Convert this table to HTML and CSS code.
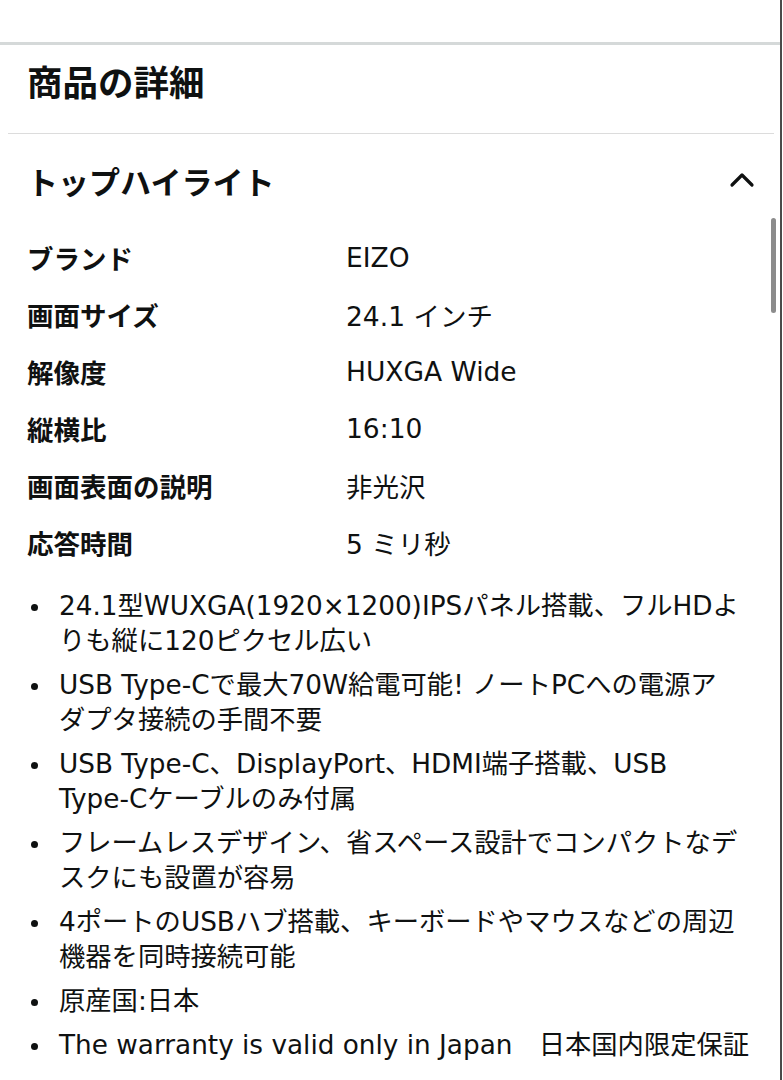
FILE: index.html
```html
<!DOCTYPE html>
<html lang="ja">
<head>
<meta charset="utf-8">
<link rel="stylesheet" href="styles.css">
</head>
<body>
<div class="page">
  <div class="top-space"></div>
  <div class="thick-sep"></div>
  <h2 class="section-title">商品の詳細</h2>
  <div class="thin-sep"></div>
  <div class="expander">
    <h3 class="expander-title">トップハイライト</h3>
    <svg class="chevron" width="26" height="18" viewBox="0 0 26 18"><path d="M3 15 L13 5 L23 15" fill="none" stroke="#0f1111" stroke-width="3.2" stroke-linecap="round" stroke-linejoin="round"/></svg>
  </div>
  <div class="specs">
    <div class="label">ブランド</div><div class="value">EIZO</div>
    <div class="label">画面サイズ</div><div class="value">24.1 インチ</div>
    <div class="label">解像度</div><div class="value">HUXGA Wide</div>
    <div class="label">縦横比</div><div class="value">16:10</div>
    <div class="label">画面表面の説明</div><div class="value">非光沢</div>
    <div class="label">応答時間</div><div class="value">5 ミリ秒</div>
  </div>
  <ul class="bullets">
    <li><span>24.1型WUXGA(1920×1200)IPSパネル搭載、フルHDよ<br>りも縦に120ピクセル広い</span></li>
    <li><span>USB Type-Cで最大70W給電可能! ノートPCへの電源ア<br>ダプタ接続の手間不要</span></li>
    <li><span>USB Type-C、DisplayPort、HDMI端子搭載、USB<br>Type-Cケーブルのみ付属</span></li>
    <li><span>フレームレスデザイン、省スペース設計でコンパクトなデ<br>スクにも設置が容易</span></li>
    <li><span>4ポートのUSBハブ搭載、キーボードやマウスなどの周辺<br>機器を同時接続可能</span></li>
    <li><span>原産国:日本</span></li>
    <li><span>The warranty is valid only in Japan　日本国内限定保証</span></li>
  </ul>
  <div class="scroll-thumb"></div>
</div>
</body>
</html>
```
FILE: styles.css
```css
html, body {
  margin: 0;
  padding: 0;
  background: #fff;
}
body {
  font-family: "DejaVu Sans", "Noto Sans CJK JP", "Noto Sans", sans-serif;
  color: #0f1111;
}
.page {
  position: relative;
  width: 780px;
  height: 1080px;
  overflow: hidden;
  border-right: 2px solid #4a4a4a;
  background: #fff;
}
.top-space {
  height: 42px;
}
.thick-sep {
  height: 3px;
  background: #d5d9d9;
}
.section-title {
  margin: 0;
  padding: 15px 0 0 27px;
  height: 73px;
  font-family: "Noto Sans CJK JP", sans-serif;
  font-size: 35.5px;
  font-weight: 700;
  line-height: 42px;
}
.thin-sep {
  height: 1px;
  margin: 0 6px 0 8px;
  background: #dcdcdc;
}
.expander {
  display: flex;
  align-items: center;
  justify-content: space-between;
  padding: 25px 25px 0 27px;
  height: 44px;
}
.expander-title {
  margin: 0;
  font-family: "Noto Sans CJK JP", sans-serif;
  font-size: 31px;
  font-weight: 700;
  line-height: 44px;
}
.chevron {
  display: block;
  margin-top: -4px;
}
.specs {
  display: grid;
  grid-template-columns: 319px 1fr;
  grid-auto-rows: 57px;
  align-items: center;
  padding: 26px 0 0 27px;
  font-size: 26.5px;
}
.label {
  font-family: "Noto Sans CJK JP", sans-serif;
  font-weight: 700;
}
.value {
  font-weight: 400;
}
.bullets {
  list-style: none;
  margin: 0;
  padding: 18px 10px 0 0;
  font-size: 26.3px;
  line-height: 35px;
}
.bullets li {
  display: flex;
  align-items: flex-start;
  margin-bottom: 9px;
  white-space: nowrap;
}
.bullets li::before {
  content: "";
  flex: none;
  width: 7px;
  height: 7px;
  border-radius: 50%;
  background: #0f1111;
  margin: 15px 21px 0 31px;
}
.scroll-thumb {
  position: absolute;
  left: 771px;
  top: 218px;
  width: 5px;
  height: 95px;
  border-radius: 3px;
  background: #8c8c8c;
}
```
